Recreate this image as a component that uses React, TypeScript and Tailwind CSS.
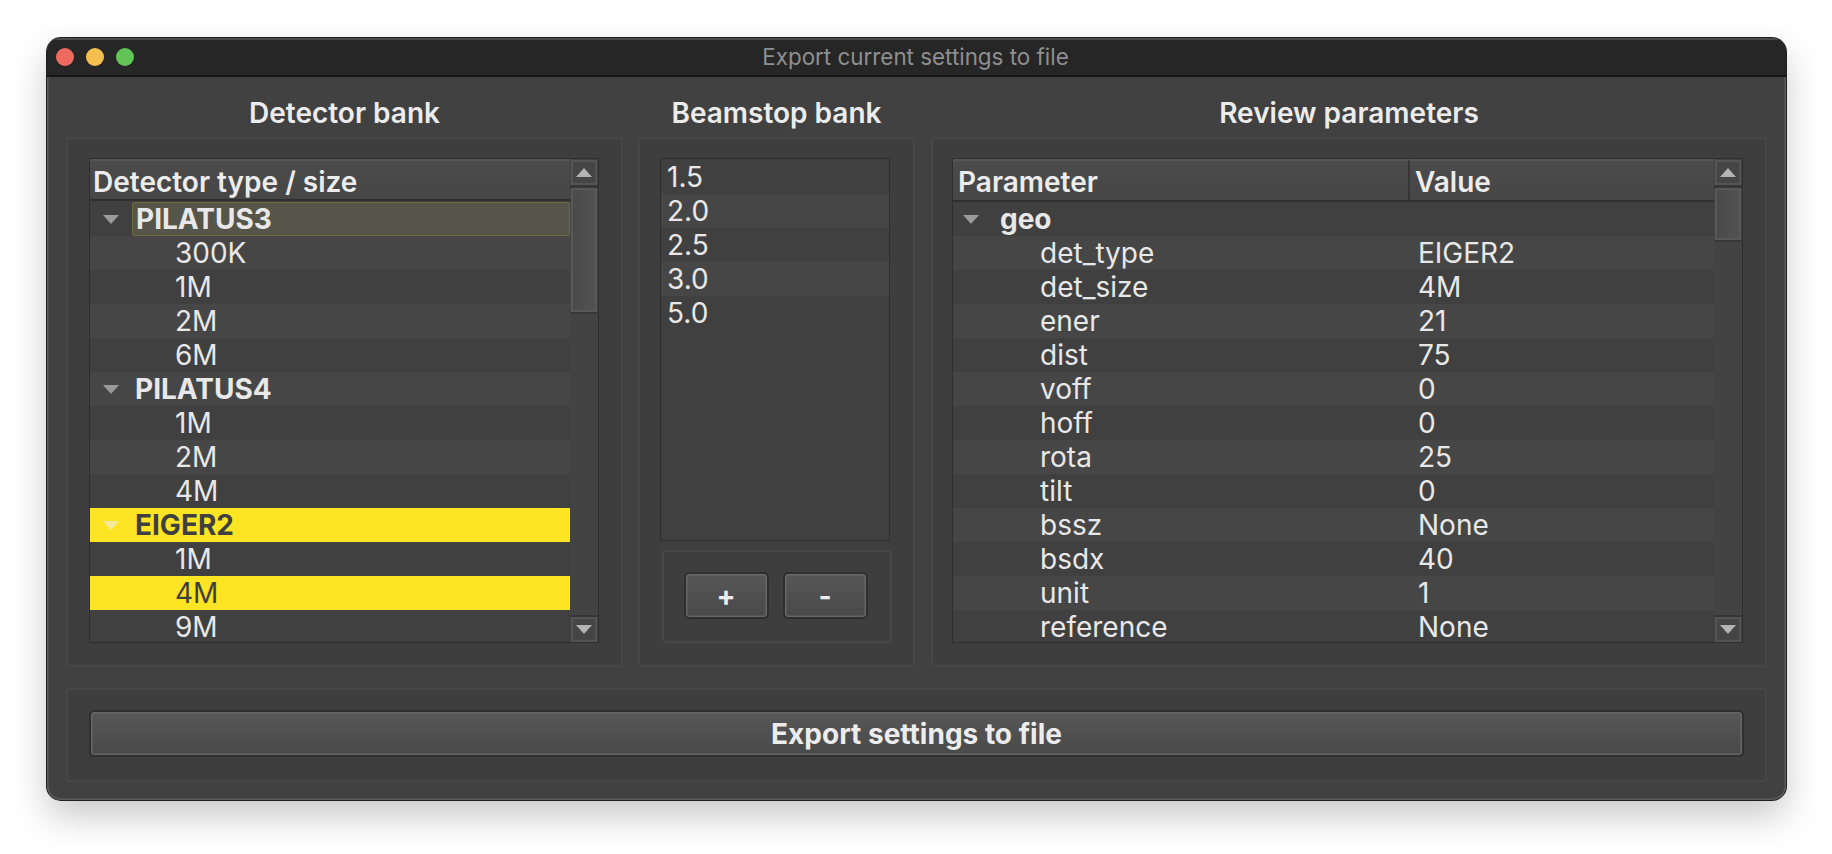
const detectorRows = [
  { label: 'PILATUS3', top: true, focus: true },
  { label: '300K' },
  { label: '1M' },
  { label: '2M' },
  { label: '6M' },
  { label: 'PILATUS4', top: true },
  { label: '1M' },
  { label: '2M' },
  { label: '4M' },
  { label: 'EIGER2', top: true, active: true },
  { label: '1M' },
  { label: '4M', active: true },
  { label: '9M' },
]

const paramRows = [
  ['det_type', 'EIGER2'],
  ['det_size', '4M'],
  ['ener', '21'],
  ['dist', '75'],
  ['voff', '0'],
  ['hoff', '0'],
  ['rota', '25'],
  ['tilt', '0'],
  ['bssz', 'None'],
  ['bsdx', '40'],
  ['unit', '1'],
  ['reference', 'None'],
]

const beamstops = ['1.5', '2.0', '2.5', '3.0', '5.0']

function Arrow({ up, color = '#9a9a9a' }: { up?: boolean; color?: string }) {
  return (
    <svg width="16" height="9" viewBox="0 0 16 9" className="shrink-0">
      <path d={up ? 'M8 0 L16 9 L0 9 Z' : 'M0 0 L16 0 L8 9 Z'} fill={color} />
    </svg>
  )
}

function ScrollButton({ up }: { up?: boolean }) {
  return (
    <div className="flex h-[25px] w-[26px] items-center justify-center border-2 border-[#545454] bg-[#454545]">
      <Arrow up={up} color="#b4b4b4" />
    </div>
  )
}

function Scrollbar({ handle }: { handle: number }) {
  return (
    <div className="flex w-[28px] shrink-0 flex-col items-center bg-[#434343] pt-px">
      <ScrollButton up />
      <div className="h-[3px] w-full bg-[#373737]" />
      <div
        className="w-[26px] shrink-0 border-2 border-[#585858] bg-gradient-to-r from-[#4a4a4a] to-[#525252]"
        style={{ height: handle }}
      />
      <div className="w-full flex-1 border-t-2 border-[#373737]" />
      <div className="h-[2px] w-full bg-[#373737]" />
      <ScrollButton />
    </div>
  )
}

function HeaderCell({ children, className = '' }: { children: string; className?: string }) {
  return (
    <div
      className={`flex items-center border-t-2 border-[#555555] bg-gradient-to-b from-[#4b4b4b] to-[#464646] pt-[3px] text-[28px] font-semibold text-[#ececec] ${className}`}
    >
      {children}
    </div>
  )
}

function GroupBox({ children, className = '' }: { children: React.ReactNode; className?: string }) {
  return (
    <div className={`rounded-[4px] border-2 border-[#474747] bg-[#3e3e3e] ${className}`}>{children}</div>
  )
}

function RaisedButton({ children, className = '' }: { children: string; className?: string }) {
  return (
    <button
      className={`flex items-center justify-center rounded-[5px] border-2 border-[#2f2f2f] bg-gradient-to-b from-[#575757] to-[#494949] font-bold text-[#ececec] shadow-[inset_0_0_0_1.5px_#666666] ${className}`}
    >
      {children}
    </button>
  )
}

function DetectorTree() {
  return (
    <div className="flex h-[485px] border border-[#2e2e2e] bg-[#404040]">
      <div className="flex min-w-0 flex-1 flex-col">
        <HeaderCell className="mb-px h-[42px] shrink-0 border-b-2 border-b-[#2f2f2f] pl-[3px]">
          Detector type / size
        </HeaderCell>
        {detectorRows.map((row, i) => (
          <div
            key={i}
            className={`flex h-[34px] shrink-0 items-center text-[28px] leading-[28px] last:h-[32px] last:pt-[2px] ${
              row.active
                ? 'bg-[#fee524] text-[#404040]'
                : i % 2
                  ? 'bg-[#464646] text-[#e8e8e8]'
                  : 'bg-[#404040] text-[#e8e8e8]'
            } ${row.top ? 'font-bold' : 'pl-[85px]'}`}
          >
            {row.top ? (
              <>
                <div className="ml-[13px] w-[29px]">
                  <Arrow color={row.active ? '#f3ea9c' : '#9a9a9a'} />
                </div>
                <div
                  className={`flex h-full flex-1 items-center pl-[3px] ${
                    row.focus ? 'rounded-[2px] border border-[#6e6a3a] bg-[#56554a]' : ''
                  }`}
                >
                  {row.label}
                </div>
              </>
            ) : (
              row.label
            )}
          </div>
        ))}
      </div>
      <Scrollbar handle={124} />
    </div>
  )
}

function BeamstopList() {
  return (
    <div className="h-[383px] border border-[#2e2e2e] bg-[#404040] pt-px">
      {beamstops.map((value, i) => (
        <div
          key={value}
          className={`flex h-[34px] items-center pl-[6px] text-[28px] text-[#e8e8e8] ${i % 2 ? 'bg-[#464646]' : ''}`}
        >
          {value}
        </div>
      ))}
    </div>
  )
}

function ParamTree() {
  return (
    <div className="flex h-[485px] border border-[#2e2e2e] bg-[#404040]">
      <div className="flex min-w-0 flex-1 flex-col">
        <div className="flex h-[43px] shrink-0 border-b-2 border-[#2f2f2f]">
          <HeaderCell className="w-[457px] border-r-2 border-r-[#363636] pl-[5px]">Parameter</HeaderCell>
          <HeaderCell className="flex-1 pl-[5px]">Value</HeaderCell>
        </div>
        <div className="flex h-[34px] shrink-0 items-center text-[28px] leading-[28px] font-bold text-[#e8e8e8]">
          <div className="ml-[10px] w-[37px]">
            <Arrow />
          </div>
          geo
        </div>
        {paramRows.map(([name, value], i) => (
          <div
            key={name}
            className={`flex h-[34px] shrink-0 items-center text-[28px] leading-[28px] text-[#e8e8e8] last:h-[32px] last:pt-[2px] ${i % 2 ? '' : 'bg-[#464646]'}`}
          >
            <div className="w-[465px] pl-[87px]">{name}</div>
            <div>{value}</div>
          </div>
        ))}
      </div>
      <Scrollbar handle={52} />
    </div>
  )
}

export default function App() {
  return (
    <div className="min-h-screen bg-white pl-[47px] pt-[38px] font-['Inter','Noto_Sans',sans-serif]">
      <div className="flex h-[762px] w-[1739px] flex-col overflow-hidden rounded-[14px] bg-[#414141] shadow-[inset_0_0_0_1.5px_#5c5c5c,0_0_0_1px_#1f1f1f,0_16px_36px_rgba(0,0,0,0.22)]">
        {/* title bar */}
        <div className="relative flex h-[39px] shrink-0 items-center justify-center border-b-2 border-t-2 border-b-[#151515] border-t-[#4a4a4a] bg-[#262626] pb-[2px] pr-[2px]">
          <div className="absolute left-[9px] top-[8px] flex gap-[12px]">
            <div className="h-[18px] w-[18px] rounded-full bg-[#ee6a5f]" />
            <div className="h-[18px] w-[18px] rounded-full bg-[#f5bf4f]" />
            <div className="h-[18px] w-[18px] rounded-full bg-[#61c454]" />
          </div>
          <span className="text-[22.4px] text-[#8f8f8f]">Export current settings to file</span>
        </div>

        <div className="flex flex-1 flex-col gap-[21px] pl-[19px] pr-[19px]">
          <div className="flex">
            <div className="w-[557px]">
              <div className="flex h-[60px] items-center justify-center pt-[12px] text-[28px] font-semibold text-[#ececec]">
                Detector bank
              </div>
              <GroupBox className="h-[530px] pl-[21px] pr-[22px] pt-[19px]">
                <DetectorTree />
              </GroupBox>
            </div>

            <div className="ml-[15px] w-[277px]">
              <div className="flex h-[60px] items-center justify-center pt-[12px] text-[28px] font-semibold text-[#ececec]">
                Beamstop bank
              </div>
              <GroupBox className="h-[530px] pl-[20px] pr-[23px] pt-[19px]">
                <BeamstopList />
                <GroupBox className="ml-[2px] mt-[9px] flex h-[93px] w-[230px] items-center justify-center gap-[14px] border-[#454545] pb-[2px] pr-[3px]">
                  <RaisedButton className="h-[47px] w-[85px] text-[28px]">+</RaisedButton>
                  <RaisedButton className="h-[47px] w-[85px] text-[28px]">-</RaisedButton>
                </GroupBox>
              </GroupBox>
            </div>

            <div className="ml-[16px] w-[836px]">
              <div className="flex h-[60px] items-center justify-center pt-[12px] text-[28px] font-semibold text-[#ececec]">
                Review parameters
              </div>
              <GroupBox className="h-[530px] pl-[19px] pr-[22px] pt-[19px]">
                <ParamTree />
              </GroupBox>
            </div>
          </div>

          <GroupBox className="flex h-[94px] items-center px-[21px] pb-[3px]">
            <RaisedButton className="h-[47px] w-full text-[28px]">Export settings to file</RaisedButton>
          </GroupBox>
        </div>
      </div>
    </div>
  )
}
